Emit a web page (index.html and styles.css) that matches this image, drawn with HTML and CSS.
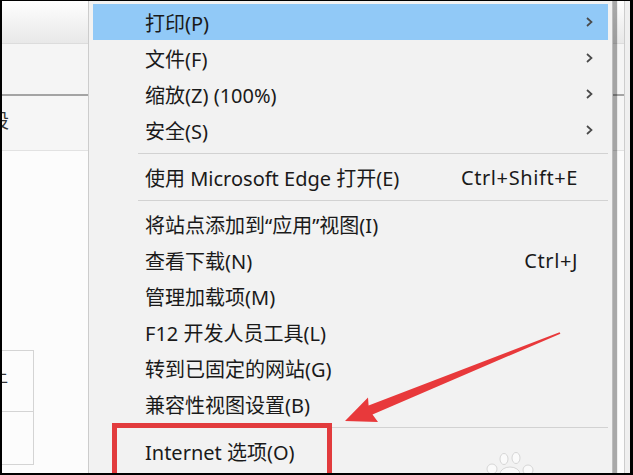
FILE: index.html
```html
<!DOCTYPE html>
<html lang="zh-CN">
<head>
    <meta charset="UTF-8">
    <title>Internet 选项</title>
    <link rel="stylesheet" href="styles.css">
</head>
<body>
    <div class="frame">
        <!-- PAGE BEHIND THE MENU -->
        <div class="page">
            <div class="page-main">
                <div class="toolbar"></div>
                <div class="tabbar"></div>
                <div class="cmdbar"><span class="cut-glyph">设</span></div>
                <div class="content">
                    <div class="table">
                        <div class="cell"><span class="cell-glyph">上</span></div>
                        <div class="cell"></div>
                    </div>
                </div>
            </div>
            <div class="scroll-strip"></div>
        </div>

        <!-- TOOLS MENU -->
        <div class="menu">
            <div class="menu-item active"><span class="label">打印(P)</span><span class="key"></span><span class="sub"><svg width="7" height="10" viewBox="0 0 7 10"><polyline points="1,1 5.5,5 1,9" /></svg></span></div>
            <div class="menu-item"><span class="label">文件(F)</span><span class="key"></span><span class="sub"><svg width="7" height="10" viewBox="0 0 7 10"><polyline points="1,1 5.5,5 1,9" /></svg></span></div>
            <div class="menu-item"><span class="label">缩放(Z) (100%)</span><span class="key"></span><span class="sub"><svg width="7" height="10" viewBox="0 0 7 10"><polyline points="1,1 5.5,5 1,9" /></svg></span></div>
            <div class="menu-item"><span class="label">安全(S)</span><span class="key"></span><span class="sub"><svg width="7" height="10" viewBox="0 0 7 10"><polyline points="1,1 5.5,5 1,9" /></svg></span></div>
            <div class="menu-sep"></div>
            <div class="menu-item"><span class="label">使用 Microsoft Edge 打开(E)</span><span class="key">Ctrl+Shift+E</span><span class="sub"></span></div>
            <div class="menu-sep"></div>
            <div class="menu-item"><span class="label">将站点添加到“应用”视图(I)</span><span class="key"></span><span class="sub"></span></div>
            <div class="menu-item"><span class="label">查看下载(N)</span><span class="key">Ctrl+J</span><span class="sub"></span></div>
            <div class="menu-item"><span class="label">管理加载项(M)</span><span class="key"></span><span class="sub"></span></div>
            <div class="menu-item"><span class="label">F12 开发人员工具(L)</span><span class="key"></span><span class="sub"></span></div>
            <div class="menu-item"><span class="label">转到已固定的网站(G)</span><span class="key"></span><span class="sub"></span></div>
            <div class="menu-item"><span class="label">兼容性视图设置(B)</span><span class="key"></span><span class="sub"></span></div>
            <div class="menu-sep"></div>
            <div class="menu-item"><span class="label">Internet 选项(O)</span><span class="key"></span><span class="sub"></span></div>
        </div>

        <!-- ANNOTATIONS -->
        <div class="mark-box"></div>
        <svg class="annotation" width="628" height="472" viewBox="2 1 628 472">
            <polygon class="arrow" points="345,421 378,422 372.5,414.5 560.4,333.7 559.6,332.3 368.6,405.5 368,397.5" />
            <g class="paw">
                <ellipse cx="504" cy="459" rx="4" ry="5.5" />
                <ellipse cx="516" cy="458" rx="4" ry="5.5" />
                <ellipse cx="492" cy="469" rx="5" ry="5" />
                <ellipse cx="528" cy="470" rx="5" ry="5" />
                <ellipse cx="510" cy="474" rx="10" ry="7" />
            </g>
        </svg>
    </div>
</body>
</html>
```

FILE: styles.css
```css
:root {
    --menu-bg: #f2f2f2;
    --highlight: #91c9f7;
    --mark-red: #e23b3d;
    --text-color: #1a1a1a;
}

body {
    margin: 0;
    font-family: "Noto Sans", "Noto Sans CJK SC", sans-serif;
    background: #000;
}

/* FRAME */
.frame {
    width: 628px;
    height: 472px;
    border-style: solid;
    border-color: #000;
    border-width: 1px 3px 2px 2px;
    position: relative;
    overflow: hidden;
    background: #fcfcfc;
}

/* PAGE STYLES */
.page {
    display: flex;
    height: 100%;
}

.page-main {
    flex: 1;
    display: flex;
    flex-direction: column;
    overflow: hidden;
}

.toolbar {
    height: 42px;
    background: linear-gradient(#fefefe, #e8e8e8);
    border-bottom: 1px solid #dcdcdc;
}

.tabbar {
    height: 50px;
    background: #f5f5f5;
    border-bottom: 2px solid #a4a4a4;
}

.cmdbar {
    height: 55px;
    background: #f6f6f6;
    border-bottom: 1px solid #e2e2e2;
    box-sizing: border-box;
    padding-top: 13px;
}

.cut-glyph {
    display: block;
    margin-left: -12px;
    font-size: 19px;
    line-height: 24px;
    color: #333;
}

.content {
    flex: 1;
    background: #fcfcfc;
}

.table {
    margin: 199px 0 0 -30px;
    width: 60px;
    border: 1px solid #d4d4d4;
}

.cell {
    height: 60px;
    box-sizing: border-box;
    padding: 14px 0 0 19px;
}

.cell + .cell {
    height: 53px;
    border-top: 1px solid #d4d4d4;
}

.cell-glyph {
    font-size: 16px;
    line-height: 20px;
    color: #333;
}

.scroll-strip {
    width: 5px;
    background: #efefef;
    border-left: 1px solid #cdcdcd;
}

/* MENU STYLES */
.menu {
    position: absolute;
    top: 0;
    left: 86px;
    width: 515px;
    padding: 2px 4px 4px;
    background: var(--menu-bg);
    border-left: 1px solid #cccccc;
    border-right: 1px solid #bdbdbd;
    box-shadow: 4px 0 1px rgba(0, 0, 0, 0.33);
    color: var(--text-color);
    font-size: 20px;
}

.menu-item {
    display: flex;
    align-items: center;
    height: 36px;
    padding-left: 52px;
    white-space: nowrap;
}

.menu-item.active {
    background: var(--highlight);
    margin-top: 1px;
}

.menu-item .label {
    flex: 1;
}

.menu-item .key {
    letter-spacing: 0.6px;
}

.menu-item .sub {
    width: 30px;
    box-sizing: border-box;
    padding-left: 8px;
    display: flex;
    align-items: center;
}

.sub polyline {
    fill: none;
    stroke: #4a4a4a;
    stroke-width: 1.7;
}

.menu-sep {
    height: 1px;
    margin: 5px 0 5px 45px;
    background: #d2d2d2;
}

/* ANNOTATION STYLES */
.mark-box {
    position: absolute;
    left: 110px;
    top: 422px;
    width: 210px;
    height: 60px;
    border: 5px solid var(--mark-red);
}

.annotation {
    position: absolute;
    top: 0;
    left: 0;
    pointer-events: none;
}

.arrow {
    fill: #e8393b;
}

.paw ellipse {
    fill: #fafafa;
    stroke: #d6d6d6;
    stroke-width: 1;
}
```
